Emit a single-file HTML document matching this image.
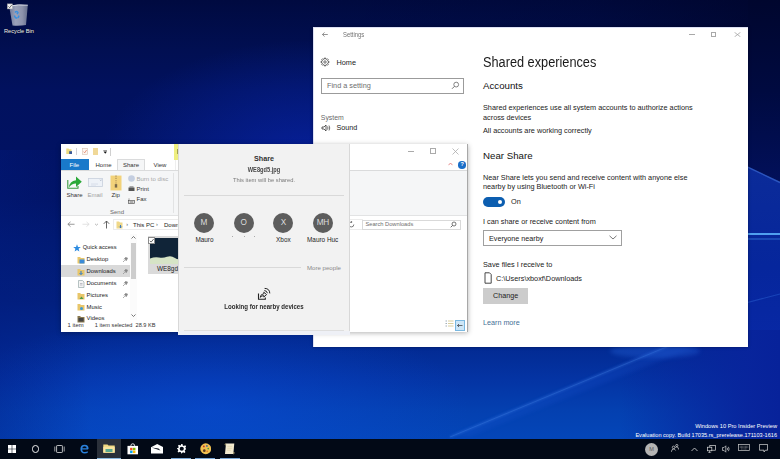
<!DOCTYPE html>
<html><head><meta charset="utf-8">
<style>
*{margin:0;padding:0;box-sizing:border-box}
html,body{width:780px;height:459px;overflow:hidden;background:#031a7a}
body{position:relative;font-family:"Liberation Sans",sans-serif;color:#000}
.a{position:absolute}
.t{position:absolute;white-space:nowrap;line-height:1}
#wall{position:absolute;left:0;top:0;width:780px;height:459px}
#settings{position:absolute;left:313px;top:27px;width:435px;height:320px;background:#fff;box-shadow:0 0 3px rgba(0,0,20,.45), inset 1px 1px 0 #dde0f4;overflow:hidden}
#explorer{position:absolute;left:61px;top:144px;width:407px;height:187.5px;background:#fff;box-shadow:0 1px 5px rgba(0,0,0,.3);border-right:1px solid #a8a8a8;overflow:hidden}
#share{position:absolute;left:178px;top:144px;width:172px;height:191px;background:#f2f2f2;box-shadow:inset 1px 0 0 #d8d8d8, inset -1px 0 0 #d8d8d8;overflow:hidden}
#taskbar{position:absolute;left:0;top:439px;width:780px;height:20px;background:#020916}
</style></head><body>
<svg id="wall" width="780" height="459" viewBox="0 0 780 459">
<defs>
<linearGradient id="g1" x1="0" y1="0" x2="0" y2="1">
<stop offset="0.000" stop-color="#000a40"/>
<stop offset="0.109" stop-color="#010f52"/>
<stop offset="0.196" stop-color="#01115e"/>
<stop offset="0.327" stop-color="#011262"/>
<stop offset="0.436" stop-color="#011466"/>
<stop offset="0.523" stop-color="#011a72"/>
<stop offset="0.654" stop-color="#02207e"/>
<stop offset="0.741" stop-color="#02288f"/>
<stop offset="0.828" stop-color="#0434a4"/>
<stop offset="0.893" stop-color="#0440b0"/>
<stop offset="0.956" stop-color="#0446b8"/>
<stop offset="1.000" stop-color="#0446b8"/>
</linearGradient>
<linearGradient id="topdk" x1="300" y1="0" x2="780" y2="0" gradientUnits="userSpaceOnUse">
<stop offset="0" stop-color="#000322" stop-opacity="0"/>
<stop offset="0.6" stop-color="#000322" stop-opacity="0.2"/>
<stop offset="1" stop-color="#000322" stop-opacity="0.6"/>
</linearGradient>
<linearGradient id="rtop" x1="0" y1="0" x2="0" y2="181" gradientUnits="userSpaceOnUse">
<stop offset="0" stop-color="#00062e"/>
<stop offset="0.5" stop-color="#000a40"/>
<stop offset="1" stop-color="#02105a"/>
</linearGradient>
<linearGradient id="rbot" x1="0" y1="150" x2="0" y2="440" gradientUnits="userSpaceOnUse">
<stop offset="0" stop-color="#0c2c98"/>
<stop offset="0.4" stop-color="#06269c"/>
<stop offset="0.7" stop-color="#0828a6"/>
<stop offset="1" stop-color="#08269e"/>
</linearGradient>
<linearGradient id="bdk" x1="620" y1="0" x2="780" y2="0" gradientUnits="userSpaceOnUse">
<stop offset="0" stop-color="#08249c" stop-opacity="0"/>
<stop offset="0.45" stop-color="#08249c" stop-opacity="0.55"/>
<stop offset="0.8" stop-color="#08249c" stop-opacity="0.95"/>
<stop offset="1" stop-color="#07229a" stop-opacity="1"/>
</linearGradient>
<radialGradient id="glow"><stop offset="0" stop-color="#0a28c0" stop-opacity="0.6"/><stop offset="1" stop-color="#0a30c0" stop-opacity="0"/></radialGradient>
<radialGradient id="glow2"><stop offset="0" stop-color="#0a4ee0" stop-opacity="0.45"/><stop offset="1" stop-color="#0a4ee0" stop-opacity="0"/></radialGradient>
<linearGradient id="ldk" x1="0" y1="0" x2="1" y2="0"><stop offset="0" stop-color="#021a80" stop-opacity="0.35"/><stop offset="1" stop-color="#021a80" stop-opacity="0"/></linearGradient>
<filter id="bl" filterUnits="userSpaceOnUse" x="0" y="0" width="780" height="459"><feGaussianBlur stdDeviation="0.6"/></filter>
<filter id="bl3" filterUnits="userSpaceOnUse" x="0" y="0" width="780" height="459"><feGaussianBlur stdDeviation="1.2"/></filter><filter id="bl2" filterUnits="userSpaceOnUse" x="0" y="0" width="780" height="459"><feGaussianBlur stdDeviation="2"/></filter>
</defs>
<rect width="780" height="459" fill="url(#g1)"/>
<rect x="0" y="0" width="780" height="40" fill="url(#topdk)"/>
<ellipse cx="310" cy="160" rx="210" ry="120" fill="url(#glow)"/>
<ellipse cx="210" cy="410" rx="260" ry="100" fill="url(#glow2)"/>
<rect x="0" y="150" width="90" height="290" fill="url(#ldk)"/>
<rect x="600" y="330" width="180" height="110" fill="url(#bdk)"/>
<polygon points="748,0 780,0 780,182 700,144 700,30 748,30" fill="url(#rtop)"/>
<polygon points="700,144 780,182 780,330 700,330" fill="url(#rbot)"/>
<line x1="700" y1="144.5" x2="780" y2="182.5" stroke="#3a68d0" stroke-width="1.4" opacity="0.7" filter="url(#bl)"/>
<line x1="740" y1="234" x2="780" y2="234" stroke="#50a0f0" stroke-width="1.8" filter="url(#bl)"/>
<line x1="740" y1="239" x2="780" y2="239" stroke="#2a6ad0" stroke-width="1.2" filter="url(#bl)"/>
<line x1="700" y1="315" x2="780" y2="294" stroke="#2a60d0" stroke-width="1.2" opacity="0.5" filter="url(#bl)"/>
<polygon points="452,436 690,337 700,337 700,345 470,436" fill="#1a5ad8" opacity="0.2" filter="url(#bl2)"/>
<line x1="450" y1="437" x2="700" y2="333" stroke="#3a7ae8" stroke-width="2.4" opacity="0.35" filter="url(#bl3)"/><line x1="450" y1="437" x2="700" y2="333" stroke="#5a9af0" stroke-width="0.8" opacity="0.25" filter="url(#bl)"/><ellipse cx="655" cy="351" rx="45" ry="7" fill="#2a70e8" opacity="0.3" filter="url(#bl2)"/>

</svg>

<!-- recycle bin -->
<svg class="a" style="left:6px;top:3px" width="24" height="24" viewBox="0 0 24 24">
<defs><linearGradient id="bin" x1="0" y1="0" x2="1" y2="0"><stop offset="0" stop-color="#9aa4bc"/><stop offset="0.35" stop-color="#d8dce6"/><stop offset="0.7" stop-color="#c4c8d4"/><stop offset="1" stop-color="#8c94a8"/></linearGradient></defs>
<path d="M3.2 3.2Q12 1 21.8 2.2L20 22Q14 23.2 6.5 22.6Z" fill="url(#bin)" opacity="0.72"/>
<path d="M3.2 3.2Q12 1 21.8 2.2" stroke="#e8eaf0" stroke-width="0.9" fill="none"/>
<path d="M9 9.5Q10.5 7.6 12 9.6L11 11.2M8.4 12.5Q9.2 15.5 11.3 14.8M13 12.6L12 15" stroke="#3a90e0" stroke-width="1.5" fill="none"/>
<rect x="1.4" y="0.9" width="5" height="5" fill="#f4f4f4" stroke="#aaa" stroke-width="0.5"/>
<path d="M2.4 3.4L3.7 4.7L5.8 1.9" stroke="#333" stroke-width="0.7" fill="none"/>
</svg>
<div class="t" style="left:4px;top:29.3px;font-size:5.7px;color:#f4f4f4;text-shadow:0 0 1px #000">Recycle Bin</div>
<div class="t" style="right:3px;top:423.5px;font-size:5.7px;color:#fff">Windows 10 Pro Insider Preview</div>
<div class="t" style="right:3px;top:432.5px;font-size:5.6px;color:#fff">Evaluation copy. Build 17035.rs_prerelease.171103-1616</div>
<div id="settings">
<!-- title bar -->
<svg class="a" style="left:9.3px;top:4.8px" width="6" height="5" viewBox="0 0 6 5"><path d="M0.5 2.5H5.8M0.5 2.5L2.5 0.4M0.5 2.5L2.5 4.6" stroke="#666" stroke-width="0.7" fill="none"/></svg>
<div class="t" style="left:30px;top:4.8px;font-size:6.7px;color:#727272;transform:scaleX(0.88);transform-origin:0 0">Settings</div>
<div class="a" style="left:375.7px;top:7.2px;width:6.5px;height:0.8px;background:#a8a8a8"></div>
<div class="a" style="left:398.3px;top:5.4px;width:5px;height:4.6px;border:0.8px solid #a8a8a8"></div>
<svg class="a" style="left:421.3px;top:5.2px" width="7" height="5.2" viewBox="0 0 7 5.2"><path d="M0.5 0.3L6.5 4.9M6.5 0.3L0.5 4.9" stroke="#a0a0a0" stroke-width="0.75"/></svg>
<!-- left nav -->
<svg class="a" style="left:7.2px;top:30px" width="10" height="10" viewBox="0 0 10 10"><path d="M8.95 4.37 L8.95 5.63 L7.91 5.75 L7.58 6.53 L8.24 7.35 L7.35 8.24 L6.53 7.58 L5.75 7.91 L5.63 8.95 L4.37 8.95 L4.25 7.91 L3.47 7.58 L2.65 8.24 L1.76 7.35 L2.42 6.53 L2.09 5.75 L1.05 5.63 L1.05 4.37 L2.09 4.25 L2.42 3.47 L1.76 2.65 L2.65 1.76 L3.47 2.42 L4.25 2.09 L4.37 1.05 L5.63 1.05 L5.75 2.09 L6.53 2.42 L7.35 1.76 L8.24 2.65 L7.58 3.47 L7.91 4.25Z" stroke="#333" stroke-width="0.75" fill="none" stroke-linejoin="round"/><circle cx="5" cy="5" r="1.2" stroke="#333" stroke-width="0.7" fill="none"/></svg>
<div class="t" style="left:23.5px;top:31.8px;font-size:7.3px;color:#1a1a1a">Home</div>
<div class="a" style="left:8px;top:51px;width:143px;height:16px;border:1px solid #9b9b9b"></div>
<div class="t" style="left:14px;top:55px;font-size:7.3px;color:#6e6e6e">Find a setting</div>
<svg class="a" style="left:138px;top:54px" width="9" height="9" viewBox="0 0 9 9"><circle cx="5.2" cy="3.6" r="2.4" stroke="#666" stroke-width="0.8" fill="none"/><path d="M3.5 5.3L1 7.8" stroke="#666" stroke-width="0.9"/></svg>
<div class="t" style="left:7.8px;top:87.6px;font-size:6.9px;color:#6a6a6a">System</div>
<svg class="a" style="left:7.5px;top:97.2px" width="11" height="8" viewBox="0 0 11 8"><path d="M1 3H3L5 1V7L3 5H1Z" stroke="#333" stroke-width="0.8" fill="none"/><path d="M6.5 2.5Q7.5 4 6.5 5.5M8 1.5Q9.5 4 8 6.5" stroke="#333" stroke-width="0.7" fill="none"/></svg>
<div class="t" style="left:23.5px;top:97.3px;font-size:7.2px;color:#1a1a1a">Sound</div>
<!-- right content -->
<div class="t" style="left:169.8px;top:27.9px;font-size:14px;color:#1a1a1a;transform:scaleX(0.91);transform-origin:0 0">Shared experiences</div>
<div class="t" style="left:170px;top:54px;font-size:9.7px;color:#111">Accounts</div>
<div class="t" style="left:170px;top:76.5px;font-size:7.3px;color:#222">Shared experiences use all system accounts to authorize actions</div>
<div class="t" style="left:170px;top:87px;font-size:7.3px;color:#222">across devices</div>
<div class="t" style="left:170px;top:99.5px;font-size:7.3px;color:#222">All accounts are working correctly</div>
<div class="t" style="left:170px;top:124.2px;font-size:9.7px;color:#111">Near Share</div>
<div class="t" style="left:170px;top:147px;font-size:7.3px;color:#222">Near Share lets you send and receive content with anyone else</div>
<div class="t" style="left:170px;top:156.3px;font-size:7.3px;color:#222">nearby by using Bluetooth or Wi-Fi</div>
<div class="a" style="left:170px;top:170.3px;width:22px;height:9.4px;border-radius:5px;background:#0c5eb0"></div>
<div class="a" style="left:184.5px;top:172.8px;width:4.6px;height:4.6px;border-radius:50%;background:#fff"></div>
<div class="t" style="left:198px;top:171px;font-size:7.3px;color:#222">On</div>
<div class="t" style="left:170px;top:191px;font-size:7.3px;color:#222">I can share or receive content from</div>
<div class="a" style="left:170px;top:203px;width:138.5px;height:15.6px;border:1px solid #a0a0a0"></div>
<div class="t" style="left:176px;top:208px;font-size:7.2px;color:#222">Everyone nearby</div>
<svg class="a" style="left:296px;top:208px" width="8" height="5" viewBox="0 0 8 5"><path d="M0.5 0.8L4 4L7.5 0.8" stroke="#555" stroke-width="0.8" fill="none"/></svg>
<div class="t" style="left:170px;top:234px;font-size:7.3px;color:#222">Save files I receive to</div>
<svg class="a" style="left:171px;top:245px" width="8" height="12" viewBox="0 0 8 12"><path d="M1 0.8H5.5L7.2 2.5V11.2H1Z" stroke="#333" stroke-width="0.9" fill="none"/></svg>
<div class="t" style="left:183px;top:247.6px;font-size:7.3px;color:#222">C:\Users\xboxf\Downloads</div>
<div class="a" style="left:170px;top:260.5px;width:45px;height:16px;background:#cccccc"></div>
<div class="t" style="left:180px;top:264.5px;font-size:7.2px;color:#222">Change</div>
<div class="t" style="left:170px;top:292.3px;font-size:7.2px;color:#3f6f96">Learn more</div>
</div>
<div id="explorer">
<!-- title row quick access -->
<svg class="a" style="left:4.6px;top:3.8px" width="6.5" height="6.5" viewBox="0 0 6.5 6.5"><path d="M0.3 0.5H2.5L3.2 1.3H5.5V6.2H0.3Z" fill="#eedc80"/><rect x="3.2" y="3.2" width="3" height="3" fill="#3a5a98"/></svg>
<div class="a" style="left:15px;top:4px;width:0.8px;height:7px;background:#d0d0d8"></div>
<svg class="a" style="left:21px;top:4px" width="6" height="7" viewBox="0 0 6 7"><rect x="0.4" y="0.4" width="5.2" height="6.2" fill="#fbf6f2" stroke="#d8c0b0" stroke-width="0.6"/><path d="M1.5 3.6L2.7 4.8L4.6 2" stroke="#e07050" stroke-width="0.7" fill="none"/></svg>
<svg class="a" style="left:32px;top:4px" width="5" height="7" viewBox="0 0 5 7"><rect x="0" y="0" width="5" height="7" fill="#f0d898"/></svg>
<svg class="a" style="left:41.5px;top:5.8px" width="4.5" height="4" viewBox="0 0 4.5 4"><path d="M0.3 0.5H4.2" stroke="#555" stroke-width="0.6"/><path d="M0.5 1.6H4L2.25 3.8Z" fill="#111"/></svg>
<div class="a" style="left:49.3px;top:3.5px;width:0.8px;height:8px;background:#d0d0d0"></div>
<!-- tabs -->
<div class="a" style="left:113px;top:0;width:5px;height:15.5px;background:#eeee80"></div><div class="a" style="left:116.3px;top:5px;width:1.7px;height:5px;background:#a0a050"></div><div class="a" style="left:113.5px;top:16px;width:0.8px;height:10px;background:#eeeeee"></div>
<div class="a" style="left:0;top:15px;width:27.5px;height:11px;background:#1979ca"></div>
<div class="t" style="left:8.5px;top:17.5px;font-size:6px;color:#fff">File</div>
<div class="t" style="left:34.5px;top:17.5px;font-size:6px;color:#333">Home</div>
<div class="a" style="left:56.3px;top:15px;width:27.5px;height:12px;background:#f5f6f7;border:1px solid #dadbdc;border-bottom:none"></div>
<div class="t" style="left:62px;top:17.5px;font-size:6px;color:#333">Share</div>
<div class="t" style="left:92.5px;top:17.5px;font-size:6px;color:#333">View</div>
<!-- ribbon -->
<div class="a" style="left:0;top:26px;width:406px;height:46px;background:#f5f6f7;border-top:1px solid #dadbdc;border-bottom:1px solid #e2e3e4"></div>
<svg class="a" style="left:5.5px;top:31px" width="16" height="14" viewBox="0 0 16 14"><path d="M0.8 5V13.2H11V11" stroke="#3a9a40" stroke-width="1.1" fill="none"/><path d="M2 12.5Q2.5 6 9 5.3V1.5L14.8 6.8L9 12V8.6Q4.5 8.6 2 12.5Z" fill="#2aa838"/></svg>
<div class="t" style="left:5.5px;top:48px;font-size:6px;color:#333">Share</div>
<svg class="a" style="left:26.5px;top:34px" width="15" height="9" viewBox="0 0 15 9"><rect x="0.5" y="0.5" width="14" height="8" fill="#eef2f8" stroke="#c8d0dc" stroke-width="0.8"/><path d="M12 1.5L13.5 3M13.5 1.5L12 3" stroke="#b0b8c8" stroke-width="0.6"/><path d="M3 6H10M3 8H8" stroke="#d0d8e4" stroke-width="0.8"/></svg>
<div class="t" style="left:26.5px;top:48px;font-size:6px;color:#a0a0a0">Email</div>
<svg class="a" style="left:49px;top:31px" width="12" height="16" viewBox="0 0 12 14" preserveAspectRatio="none"><rect x="0.5" y="0.5" width="11" height="13" fill="#f2d27a"/><path d="M6 0.5V9" stroke="#9a8050" stroke-width="1" stroke-dasharray="1 1"/><rect x="4.8" y="8" width="2.4" height="3" fill="#7a6a4a"/></svg>
<div class="t" style="left:50.5px;top:48px;font-size:6px;color:#333">Zip</div>
<svg class="a" style="left:66.8px;top:30.8px" width="7" height="7" viewBox="0 0 7 7"><circle cx="3.5" cy="3.5" r="3.3" fill="#c4cee0"/></svg>
<div class="t" style="left:75.5px;top:31.5px;font-size:6px;color:#a8a8a8">Burn to disc</div>
<svg class="a" style="left:67px;top:42px" width="7" height="6" viewBox="0 0 7 6"><rect x="0.5" y="1.5" width="6" height="3.5" fill="#555"/><rect x="1.5" y="0.3" width="4" height="1.5" fill="#888"/></svg>
<div class="t" style="left:75.5px;top:41.6px;font-size:6px;color:#333">Print</div>
<svg class="a" style="left:67.2px;top:53.5px" width="7" height="6" viewBox="0 0 7 6"><path d="M1 0.3V2.5" stroke="#666" stroke-width="0.6"/><rect x="0.4" y="2.5" width="6.2" height="3.1" fill="#fff" stroke="#555" stroke-width="0.7"/><path d="M1.5 4H5.5" stroke="#333" stroke-width="0.8"/></svg>
<div class="t" style="left:75.5px;top:52.3px;font-size:6px;color:#333">Fax</div>
<div class="t" style="left:49px;top:64.5px;font-size:6px;color:#6a6a6a">Send</div>
<div class="a" style="left:112px;top:29px;width:1px;height:40px;background:#e2e3e4"></div>
<!-- window controls -->
<div class="a" style="left:346.5px;top:6.5px;width:6px;height:0.8px;background:#aaa"></div>
<div class="a" style="left:369.2px;top:4px;width:6px;height:6px;border:0.8px solid #aaa"></div>
<svg class="a" style="left:391px;top:4px" width="7" height="7" viewBox="0 0 7 7"><path d="M0.5 0.5L6.5 6.5M6.5 0.5L0.5 6.5" stroke="#a8a8a8" stroke-width="0.75"/></svg>
<svg class="a" style="left:387px;top:18px" width="5" height="4" viewBox="0 0 5 4"><path d="M0.5 3.2L2.5 1L4.5 3.2" stroke="#e07070" stroke-width="0.8" fill="none"/></svg>
<div class="a" style="left:397px;top:17px;width:7.5px;height:7.5px;border-radius:50%;background:#1a6ec8"></div>
<div class="t" style="left:399.5px;top:18px;font-size:5.5px;color:#fff;font-weight:bold">?</div>
<!-- address row -->
<svg class="a" style="left:5.5px;top:77.3px" width="8" height="6.5" viewBox="0 0 9 7"><path d="M1 3.5H8.5M1 3.5L4 0.8M1 3.5L4 6.2" stroke="#808080" stroke-width="0.9" fill="none"/></svg>
<svg class="a" style="left:20.5px;top:77.3px" width="8" height="6.5" viewBox="0 0 9 7"><path d="M8 3.5H0.5M8 3.5L5 0.8M8 3.5L5 6.2" stroke="#dadada" stroke-width="0.9" fill="none"/></svg>
<svg class="a" style="left:33px;top:79px" width="5" height="3" viewBox="0 0 5 3"><path d="M1 0.8L2.5 2.2L4 0.8" stroke="#999" stroke-width="0.7" fill="none"/></svg>
<svg class="a" style="left:42px;top:76px" width="7" height="9" viewBox="0 0 7 9"><path d="M3.5 8.5V1M3.5 1L0.8 3.8M3.5 1L6.2 3.8" stroke="#555" stroke-width="0.9" fill="none"/></svg>
<div class="a" style="left:52px;top:75px;width:250px;height:11px;border:1px solid #ececec;border-right:none"></div>
<svg class="a" style="left:55px;top:76.5px" width="7" height="8" viewBox="0 0 7 8"><path d="M0.5 0.5H3L4 1.5H6.5V7.5H0.5Z" fill="#f0d888"/><path d="M4.5 4V6.8M3.3 5.6L4.5 6.8L5.7 5.6" stroke="#2a70c0" stroke-width="0.9" fill="none"/></svg>
<div class="t" style="left:65.3px;top:77.5px;font-size:5.5px;color:#555">&#8250;</div>
<div class="t" style="left:72px;top:77.5px;font-size:6px;color:#222">This PC</div>
<div class="t" style="left:95px;top:77.5px;font-size:5.5px;color:#555">&#8250;</div>
<div class="t" style="left:103px;top:77.5px;font-size:6px;color:#222">Downloads</div>
<svg class="a" style="left:287px;top:77px" width="7" height="7" viewBox="0 0 7 7"><path d="M5.8 3.5A2.5 2.5 0 1 1 3.5 1" stroke="#555" stroke-width="0.8" fill="none"/><path d="M3 0L4.5 1L3 2Z" fill="#555"/></svg>
<div class="a" style="left:301px;top:75.5px;width:98.5px;height:10.5px;border:1px solid #d9d9d9;background:#fff"></div>
<div class="t" style="left:304.5px;top:77.5px;font-size:5.7px;color:#6d6d6d">Search Downloads</div>
<svg class="a" style="left:389px;top:77px" width="7" height="7" viewBox="0 0 7 7"><circle cx="4" cy="3" r="2" stroke="#555" stroke-width="0.8" fill="none"/><path d="M2.6 4.4L0.7 6.3" stroke="#555" stroke-width="0.9"/></svg>
<!-- nav pane -->
<div class="a" style="left:0;top:121.4px;width:69px;height:11.5px;background:#d9d9d9"></div>
<svg class="a" style="left:12px;top:100px" width="8" height="8" viewBox="0 0 8 8"><path d="M4 0.3L5 3H7.8L5.6 4.7L6.4 7.6L4 5.9L1.6 7.6L2.4 4.7L0.2 3H3Z" fill="#2d8be0"/></svg>
<div class="t" style="left:21.7px;top:100.5px;font-size:5.7px;color:#222">Quick access</div>
<svg class="a" style="left:16px;top:112px" width="8" height="8" viewBox="0 0 8 8"><path d="M0.5 1H3L4 2H7.5V7.5H0.5Z" fill="#e8c66a"/><rect x="2.5" y="3.5" width="5" height="4" fill="#3a8ad8"/></svg>
<div class="t" style="left:25.6px;top:113.3px;font-size:5.9px;color:#222">Desktop</div>
<svg class="a" style="left:16px;top:124px" width="8" height="8" viewBox="0 0 8 8"><path d="M0.5 1H3L4 2H7.5V7.5H0.5Z" fill="#e8c66a"/><path d="M4 3V6.5M2.5 5L4 6.5L5.5 5" stroke="#2a7ad0" stroke-width="1" fill="none"/></svg>
<div class="t" style="left:25.6px;top:125.0px;font-size:5.9px;color:#222">Downloads</div>
<svg class="a" style="left:16px;top:136px" width="8" height="8" viewBox="0 0 8 8"><path d="M1.5 0.5H5.5L7 2V7.5H1.5Z" fill="#f4f4f4" stroke="#9aa" stroke-width="0.7"/><path d="M3 3.5H5.5M3 5H5.5" stroke="#889" stroke-width="0.5"/></svg>
<div class="t" style="left:25.6px;top:137.0px;font-size:5.9px;color:#222">Documents</div>
<svg class="a" style="left:16px;top:148px" width="8" height="8" viewBox="0 0 8 8"><path d="M0.5 1H3L4 2H7.5V7.5H0.5Z" fill="#e8c66a"/><path d="M2.5 7L4.5 4.5L6.5 7Z" fill="#4a9a4a"/></svg>
<div class="t" style="left:25.6px;top:148.8px;font-size:5.9px;color:#222">Pictures</div>
<svg class="a" style="left:16px;top:159px" width="8" height="8" viewBox="0 0 8 8"><path d="M0.5 1H3L4 2H7.5V7.5H0.5Z" fill="#e8c66a"/><circle cx="4.5" cy="5.5" r="1.5" fill="#3a9ad8"/></svg>
<div class="t" style="left:25.6px;top:160.5px;font-size:5.9px;color:#222">Music</div>
<svg class="a" style="left:16px;top:171px" width="8" height="8" viewBox="0 0 8 8"><path d="M0.5 1H3L4 2H7.5V7.5H0.5Z" fill="#8a7a50"/><rect x="1.5" y="3" width="5" height="3.5" fill="#444"/></svg>
<div class="t" style="left:25.6px;top:172.0px;font-size:5.9px;color:#222">Videos</div>
<svg class="a" style="left:61px;top:113px" width="6" height="6" viewBox="0 0 6 6"><path d="M1 5L2.5 3.5M2 2.5L3.5 4M2.5 1.5L4.5 3.5L5.5 1L3.5 0.5Z" stroke="#888" stroke-width="0.7" fill="#888"/></svg>
<svg class="a" style="left:61px;top:125px" width="6" height="6" viewBox="0 0 6 6"><path d="M1 5L2.5 3.5M2 2.5L3.5 4M2.5 1.5L4.5 3.5L5.5 1L3.5 0.5Z" stroke="#888" stroke-width="0.7" fill="#888"/></svg>
<svg class="a" style="left:61px;top:137px" width="6" height="6" viewBox="0 0 6 6"><path d="M1 5L2.5 3.5M2 2.5L3.5 4M2.5 1.5L4.5 3.5L5.5 1L3.5 0.5Z" stroke="#888" stroke-width="0.7" fill="#888"/></svg>
<svg class="a" style="left:61px;top:149px" width="6" height="6" viewBox="0 0 6 6"><path d="M1 5L2.5 3.5M2 2.5L3.5 4M2.5 1.5L4.5 3.5L5.5 1L3.5 0.5Z" stroke="#888" stroke-width="0.7" fill="#888"/></svg>
<!-- scrollbar -->
<div class="a" style="left:69px;top:90px;width:7px;height:86px;background:#fbfbfb"></div>
<svg class="a" style="left:70px;top:92px" width="5" height="3" viewBox="0 0 5 3"><path d="M0.5 2.5L2.5 0.5L4.5 2.5" stroke="#555" stroke-width="0.8" fill="none"/></svg>
<div class="a" style="left:70px;top:98.5px;width:5px;height:36.5px;background:#cdcdcd"></div>
<svg class="a" style="left:70px;top:170px" width="5" height="3" viewBox="0 0 5 3"><path d="M0.5 0.5L2.5 2.5L4.5 0.5" stroke="#555" stroke-width="0.8" fill="none"/></svg>
<!-- file item -->
<div class="a" style="left:86.5px;top:92px;width:40px;height:37.5px;background:#dadada"></div>
<div class="a" style="left:88.5px;top:94.2px;width:32px;height:25.8px;background:#102438;overflow:hidden"><svg width="32" height="26" viewBox="0 0 32 26"><path d="M0 20.5Q5 18.5 9 19.5T17 18.8T25 20T32 19.5V26H0Z" fill="#d6e4c6"/></svg></div>
<div class="a" style="left:87.4px;top:93px;width:6.6px;height:6.6px;background:#fff;border:0.8px solid #8a8a8a"></div>
<svg class="a" style="left:88px;top:93.6px" width="5.4" height="5.4" viewBox="0 0 5 5"><path d="M0.8 2.6L2 3.8L4.3 1" stroke="#333" stroke-width="0.7" fill="none"/></svg>
<div class="t" style="left:96px;top:121.8px;font-size:6.4px;color:#222">WE8gd5.jpg</div>
<!-- status bar -->
<div class="t" style="left:6.6px;top:179px;font-size:5.9px;color:#333">1 item</div>
<div class="t" style="left:33.8px;top:179px;font-size:5.6px;color:#333">1 item selected&nbsp; 28.9 KB</div>
<svg class="a" style="left:384px;top:176px" width="9" height="8" viewBox="0 0 9 8"><path d="M0.5 1H2M0.5 3.5H2M0.5 6H2" stroke="#8a9aa8" stroke-width="0.8"/><path d="M3 1H8.5M3 3.5H8.5M3 6H8.5" stroke="#c0b060" stroke-width="0.6"/></svg>
<div class="a" style="left:394px;top:176px;width:10px;height:11px;background:#cde6f7;border:1px solid #7ab8e0"></div>
<svg class="a" style="left:396px;top:179px" width="6" height="5" viewBox="0 0 6 5"><path d="M0.5 2.5H5.5M0.5 2.5L2 1M0.5 2.5L2 4" stroke="#333" stroke-width="0.7" fill="none"/></svg>
</div>
<div id="share">
<div class="t" style="left:0;width:172px;text-align:center;top:10.8px;font-size:7.2px;font-weight:bold;color:#303030">Share</div>
<div class="t" style="left:0;width:172px;text-align:center;top:22.6px;font-size:6.6px;font-weight:bold;color:#484848;transform:scaleX(0.86);transform-origin:86px 0">WE8gd5.jpg</div>
<div class="t" style="left:0;width:172px;text-align:center;top:32.8px;font-size:6.1px;color:#7a7a7a;transform:scaleX(0.95);transform-origin:86px 0">This item will be shared.</div>
<div class="a" style="left:6px;top:51px;width:160px;height:1px;background:#d9d9d9"></div>
<div class="a" style="left:16px;top:68.7px;width:20px;height:20px;border-radius:50%;background:#5d5d5d"></div>
<div class="t" style="left:16px;width:20px;text-align:center;top:75.3px;font-size:8.2px;color:#dcdcdc">M</div>
<div class="a" style="left:55.7px;top:68.7px;width:20px;height:20px;border-radius:50%;background:#5d5d5d"></div>
<div class="t" style="left:55.7px;width:20px;text-align:center;top:75.3px;font-size:8.2px;color:#dcdcdc">O</div>
<div class="a" style="left:95.4px;top:68.7px;width:20px;height:20px;border-radius:50%;background:#5d5d5d"></div>
<div class="t" style="left:95.4px;width:20px;text-align:center;top:75.3px;font-size:8.2px;color:#dcdcdc">X</div>
<div class="a" style="left:134.9px;top:68.7px;width:20px;height:20px;border-radius:50%;background:#5d5d5d"></div>
<div class="t" style="left:134.9px;width:20px;text-align:center;top:75.3px;font-size:8.2px;color:#dcdcdc;letter-spacing:-0.3px">MH</div>
<div class="t" style="left:6.5px;width:40px;text-align:center;top:93px;font-size:6.4px;color:#222">Mauro</div>
<div class="a" style="left:53.5px;top:92px;width:1px;height:1.2px;background:#aaa"></div>
<div class="a" style="left:65.5px;top:92px;width:1px;height:1.2px;background:#aaa"></div>
<div class="a" style="left:75.5px;top:92px;width:1px;height:1.2px;background:#aaa"></div>
<div class="t" style="left:85.4px;width:40px;text-align:center;top:93px;font-size:6.4px;color:#222">Xbox</div>
<div class="t" style="left:129px;top:93px;font-size:6.4px;color:#222">Mauro Huc</div>
<div class="a" style="left:6px;top:123.2px;width:117px;height:1px;background:#d9d9d9"></div>
<div class="t" style="left:129px;top:120.6px;font-size:6.1px;color:#8a8a8a">More people</div>
<svg class="a" style="left:79px;top:143px" width="14" height="14" viewBox="0 0 14 14"><path d="M1.5 6.5V12.2H8.3V10.5" stroke="#222" stroke-width="1.1" fill="none"/><path d="M3.2 10.3Q3.5 7.2 6.8 6.7V5.2L9.6 7.6L6.8 10V8.6Q4.8 8.6 3.2 10.3Z" stroke="#222" stroke-width="0.95" fill="none" stroke-linejoin="round"/><path d="M7.3 3.6Q9.8 3.6 10.4 6.2M7.6 1.4Q12.6 1.4 12.8 6.4" stroke="#222" stroke-width="1" fill="none"/></svg>
<div class="t" style="left:0;width:172px;text-align:center;top:160px;font-size:6.6px;font-weight:bold;color:#2a2a2a;transform:scaleX(0.925);transform-origin:86px 0">Looking for nearby devices</div>
<div class="a" style="left:6px;top:186px;width:160px;height:1px;background:#dedede"></div>
<div class="a" style="left:0;top:187px;width:172px;height:4px;background:#eef0f6"></div>
</div>
<div id="taskbar">
<svg class="a" style="left:8px;top:5.8px" width="8" height="8" viewBox="0 0 8 8"><path d="M0 0H3.7V3.7H0ZM4.3 0H8V3.7H4.3ZM0 4.3H3.7V8H0ZM4.3 4.3H8V8H4.3Z" fill="#fff"/></svg>
<div class="a" style="left:31.6px;top:6.1px;width:7.6px;height:7.6px;border-radius:50%;border:1.1px solid #f0f0f0"></div>
<svg class="a" style="left:53.5px;top:5.8px" width="11" height="8" viewBox="0 0 11 8"><rect x="2.6" y="0.5" width="5.8" height="7" rx="0.6" fill="none" stroke="#d8d8d8" stroke-width="0.85"/><path d="M0.8 1.5V6.5M10.2 1.5V6.5" stroke="#bbb" stroke-width="0.85"/></svg>
<svg class="a" style="left:80px;top:5px" width="9" height="10" viewBox="0 0 11 11"><path d="M9.5 6.2H2.6Q2.8 9.3 6 9.3Q8 9.3 9.5 8.3V10.2Q8 11 5.8 11Q0.5 11 0.5 5.6Q0.5 0.3 5.8 0.3Q10.5 0.3 10.5 5.3ZM2.7 4.5H8.2Q8 2 5.5 2Q3.2 2 2.7 4.5Z" fill="#2a80da"/></svg>
<div class="a" style="left:97px;top:0;width:23.5px;height:20px;background:#2a303a"></div>
<div class="a" style="left:97px;top:18.8px;width:23.5px;height:1.2px;background:#8ab8e0"></div>
<svg class="a" style="left:102.5px;top:4.8px" width="12" height="9" viewBox="0 0 12 9"><path d="M0.3 0.5H4.5L5.5 1.5H11.7V8.7H0.3Z" fill="#f0d880"/><rect x="0.3" y="2.8" width="11.4" height="5.9" fill="#f8e4a0"/><rect x="2.5" y="5" width="7" height="3" fill="#5aa890"/></svg>
<svg class="a" style="left:127px;top:4px" width="11.5" height="11.5" viewBox="0 0 12 12"><path d="M4 3Q4 0.8 6 0.8Q8 0.8 8 3" stroke="#fff" stroke-width="0.9" fill="none"/><rect x="0.5" y="3" width="11" height="8.8" fill="#fff"/><rect x="3.2" y="5" width="2.6" height="2.6" fill="#f05022"/><rect x="6.2" y="5" width="2.6" height="2.6" fill="#7fba00"/><rect x="3.2" y="8" width="2.6" height="2.6" fill="#00a4ef"/><rect x="6.2" y="8" width="2.6" height="2.6" fill="#ffb900"/></svg>
<svg class="a" style="left:150.8px;top:5px" width="12.5" height="9.5" viewBox="0 0 12.5 9.5"><path d="M0 3.3L6.2 0L12.5 3.3V9.5H0Z" fill="#fff"/><path d="M0.5 3.5L9.5 6.5L7.5 4.5Z" fill="#020916"/></svg>
<svg class="a" style="left:176.5px;top:5.3px" width="9.5" height="9.5" viewBox="0 0 10 10"><path d="M4.2 0H5.8L6.1 1.5L7.2 2L8.5 1.2L9.6 2.3L8.8 3.6L9.2 4.7L10 5V5.8L8.6 6.1L8.1 7.2L8.9 8.5L7.8 9.6L6.5 8.8L5.5 9.2L5.2 10H4.6L4.1 8.7L3 8.2L1.7 9L0.6 7.9L1.4 6.6L0.9 5.6L0 5.3V4.5L1.3 4.2L1.8 3.1L1 1.8L2.1 0.7L3.4 1.5L4.4 1Z" fill="#fff"/><circle cx="5" cy="5" r="2.2" fill="#020916"/></svg>
<div class="a" style="left:171px;top:18.8px;width:20px;height:1.2px;background:#7aa8d8"></div>
<svg class="a" style="left:199.5px;top:4px" width="11.5" height="11.5" viewBox="0 0 12 12"><circle cx="6" cy="6" r="5.7" fill="#f0c050"/><circle cx="4" cy="3.6" r="0.9" fill="#c03020"/><circle cx="7.2" cy="3" r="0.9" fill="#3a60a0"/><circle cx="8.6" cy="5.8" r="0.9" fill="#40a040"/><circle cx="4.5" cy="8" r="1.4" fill="#5a3a20"/><circle cx="7.5" cy="8.5" r="0.8" fill="#e06a20"/></svg>
<div class="a" style="left:195px;top:18.8px;width:20px;height:1.2px;background:#7aa8d8"></div>
<svg class="a" style="left:224px;top:4px" width="11" height="11.5" viewBox="0 0 11 12"><path d="M1.8 0.5H10.5L9.5 11.5H0.8Z" fill="#f2ead0"/><path d="M1.8 0.5Q0.8 0.5 0.8 2H2.2M9.5 11.5Q10.5 11.5 10.5 10H9.2" stroke="#c8b880" stroke-width="0.7" fill="none"/><path d="M3.3 3.5H8.2M3.2 5.5H8M3 7.5H7" stroke="#d8c898" stroke-width="0.5"/></svg>
<div class="a" style="left:219.5px;top:18.8px;width:20px;height:1.2px;background:#7aa8d8"></div>
<!-- tray -->
<div class="a" style="left:645px;top:3.5px;width:13px;height:13px;border-radius:50%;background:#b4b4b4"></div>
<div class="t" style="left:645px;width:13px;text-align:center;top:7.6px;font-size:5.6px;color:#5a5a5a">M</div>
<svg class="a" style="left:671px;top:5px" width="8" height="8" viewBox="0 0 8 8"><circle cx="2.6" cy="3.4" r="1.3" stroke="#ddd" stroke-width="0.7" fill="none"/><path d="M0.4 7.8Q0.6 5 2.6 5Q4 5 4.6 6.5" stroke="#ddd" stroke-width="0.7" fill="none"/><circle cx="5.8" cy="1.5" r="1.1" stroke="#ddd" stroke-width="0.7" fill="none"/><path d="M4.4 3.8Q4.8 2.9 5.8 2.9Q7.6 2.9 7.6 5.5" stroke="#ddd" stroke-width="0.7" fill="none"/></svg>
<svg class="a" style="left:691px;top:7.5px" width="7" height="4.5" viewBox="0 0 7 4.5"><path d="M0.5 4L3.5 1L6.5 4" stroke="#e0e0e0" stroke-width="0.8" fill="none"/></svg>
<svg class="a" style="left:706.5px;top:5.5px" width="9" height="8.5" viewBox="0 0 9 8.5"><rect x="2.8" y="0.4" width="5.8" height="4.8" fill="none" stroke="#ddd" stroke-width="0.7"/><rect x="0.4" y="2.2" width="4.4" height="3.6" fill="#020916" stroke="#ddd" stroke-width="0.7"/><path d="M2.6 5.8V7.9M1 7.9H4.2" stroke="#ddd" stroke-width="0.7"/></svg>
<svg class="a" style="left:721.5px;top:5.6px" width="8.5" height="8" viewBox="0 0 8.5 8"><path d="M0.4 2.6H2L3.8 0.8V7.2L2 5.4H0.4Z" stroke="#ddd" stroke-width="0.7" fill="none"/><path d="M5.2 2.8Q5.9 4 5.2 5.2M6.4 1.8Q7.8 4 6.4 6.2" stroke="#ddd" stroke-width="0.7" fill="none"/></svg>
<svg class="a" style="left:738px;top:5.3px" width="12" height="7" viewBox="0 0 12 7"><rect x="0.4" y="0.4" width="11.2" height="6.2" fill="none" stroke="#ccc" stroke-width="0.7"/><path d="M1.8 2.3H10.2M1.8 3.6H10.2M3.2 5H8.8" stroke="#bbb" stroke-width="0.55" stroke-dasharray="0.8 0.5"/></svg>
<svg class="a" style="left:759px;top:5px" width="9" height="8.5" viewBox="0 0 9 8.5"><path d="M0.4 0.4H8.6V6.2H6.5L5 8V6.2H0.4Z" fill="none" stroke="#ddd" stroke-width="0.75"/></svg>
</div>
</body></html>
